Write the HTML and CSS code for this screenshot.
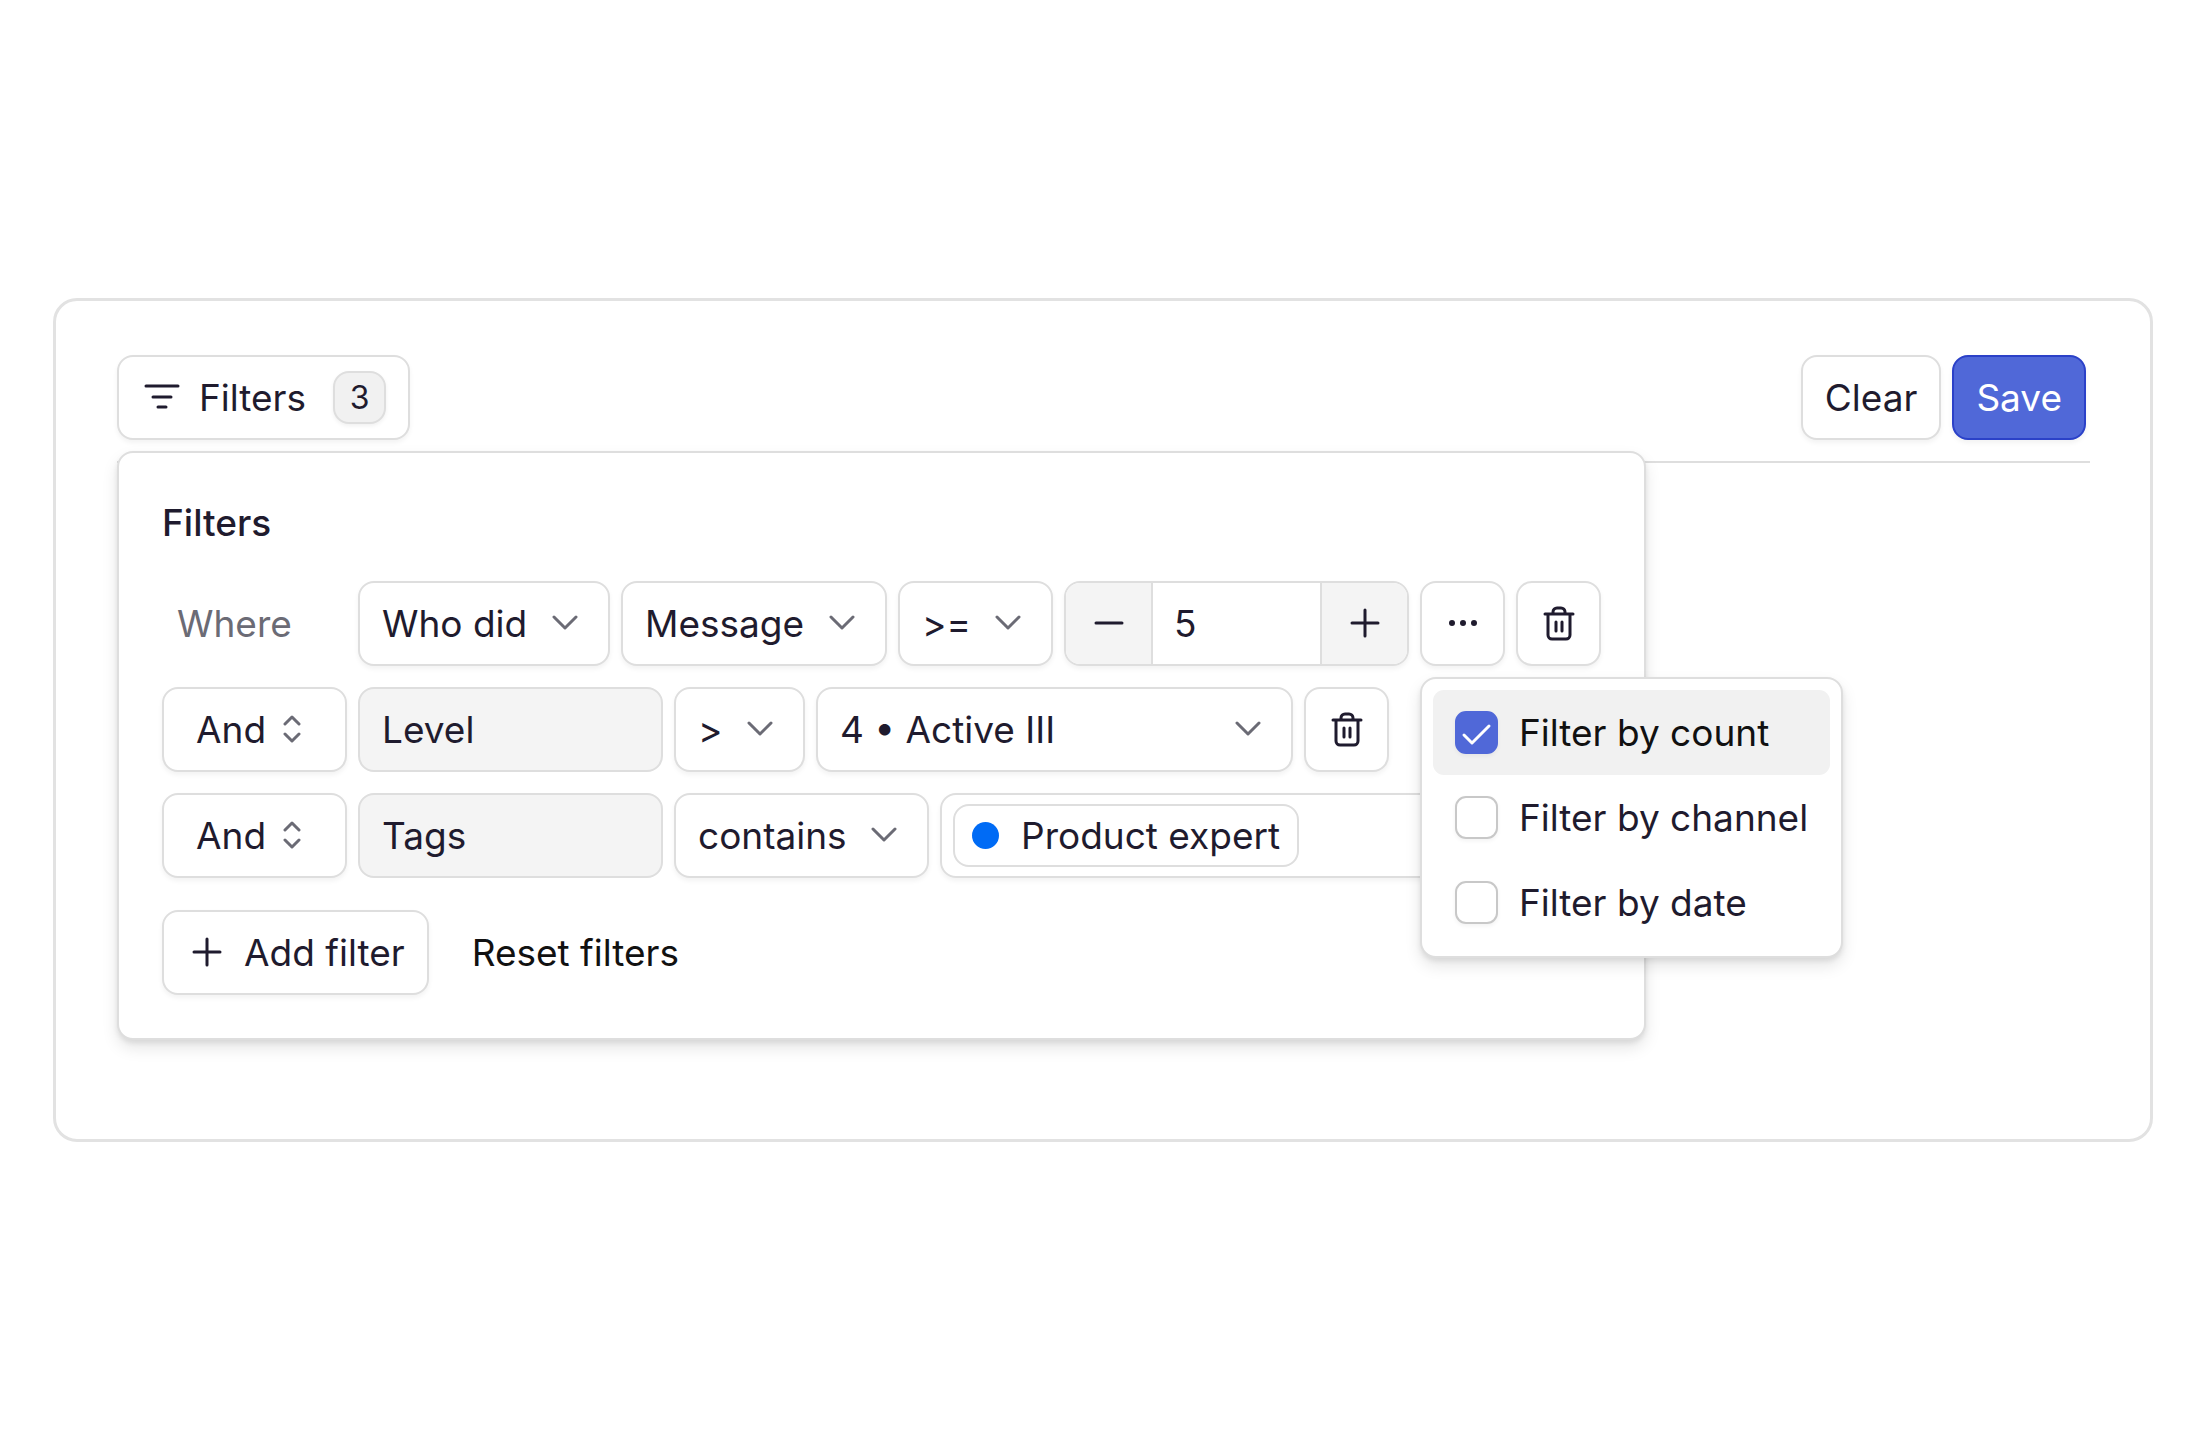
FILE: index.html
```
<!DOCTYPE html>
<html lang="en">
<head>
    <meta charset="UTF-8">
    <meta name="viewport" content="width=device-width, initial-scale=1.0">
    <link rel="stylesheet" href="styles.css">
    <title>Filters</title>
</head>
<body>
    <!-- Shared icons -->
    <svg class="sprite" aria-hidden="true">
        <symbol id="chevron" viewBox="0 0 26 16"><path d="M2 2l11 11L24 2"/></symbol>
        <symbol id="updown" viewBox="0 0 18 28"><path d="M2 9l7-7 7 7M2 19l7 7 7-7"/></symbol>
        <symbol id="plus" viewBox="0 0 30 30"><path d="M15 2v26M2 15h26"/></symbol>
        <symbol id="minus" viewBox="0 0 30 30"><path d="M2 15h26"/></symbol>
        <symbol id="trash" viewBox="0 0 36 36"><path d="M4 9h28M12 9V7a4 4 0 0 1 4-4h4a4 4 0 0 1 4 4v2M7 9v21a4 4 0 0 0 4 4h14a4 4 0 0 0 4-4V9M15 17v9M21 17v9"/></symbol>
        <symbol id="check" viewBox="0 0 43 43"><path d="M9 24l8 8 17-17"/></symbol>
    </svg>

    <main class="card">
        <header class="toolbar">
            <button type="button" class="btn filters-btn">
                <svg class="icon" width="36" height="26" viewBox="0 0 36 26"><path d="M2 2h32M9 13h18M14 23h8"/></svg>
                Filters
                <span class="badge">3</span>
            </button>
            <div class="actions">
                <button type="button" class="btn">Clear</button>
                <button type="button" class="btn primary">Save</button>
            </div>
        </header>

        <form class="popup">
            <h2>Filters</h2>

            <div class="rows">
                <div class="row">
                    <span class="where">Where</span>
                    <div class="select">
                        <select aria-label="Type"><option>Who did</option></select>
                        <svg class="icon chevron"><use href="#chevron"/></svg>
                    </div>
                    <div class="select">
                        <select aria-label="Event"><option>Message</option></select>
                        <svg class="icon chevron"><use href="#chevron"/></svg>
                    </div>
                    <div class="select">
                        <select aria-label="Count operator"><option>&gt;=</option></select>
                        <svg class="icon chevron"><use href="#chevron"/></svg>
                    </div>
                    <div class="stepper">
                        <button type="button" aria-label="Decrease"><svg class="icon math"><use href="#minus"/></svg></button>
                        <input type="text" inputmode="numeric" aria-label="Count" value="5">
                        <button type="button" aria-label="Increase"><svg class="icon math"><use href="#plus"/></svg></button>
                    </div>
                    <div class="more">
                        <button type="button" class="btn square" aria-label="More options">
                            <svg class="dots" width="30" height="8" viewBox="0 0 30 8"><circle cx="4" cy="4" r="3"/><circle cx="15" cy="4" r="3"/><circle cx="26" cy="4" r="3"/></svg>
                        </button>
                        <div class="menu">
                            <label class="menu-item active">
                                <span class="check"><input type="checkbox" checked><svg class="icon"><use href="#check"/></svg></span>
                                Filter by count
                            </label>
                            <label class="menu-item">
                                <span class="check"><input type="checkbox"></span>
                                Filter by channel
                            </label>
                            <label class="menu-item">
                                <span class="check"><input type="checkbox"></span>
                                Filter by date
                            </label>
                        </div>
                    </div>
                    <button type="button" class="btn square" aria-label="Delete filter"><svg class="icon trash"><use href="#trash"/></svg></button>
                </div>

                <div class="row">
                    <div class="select logic">
                        <select aria-label="Logic"><option>And</option></select>
                        <svg class="icon updown"><use href="#updown"/></svg>
                    </div>
                    <input class="field" type="text" aria-label="Attribute" value="Level" readonly>
                    <div class="select">
                        <select aria-label="Level operator"><option>&gt;</option></select>
                        <svg class="icon chevron"><use href="#chevron"/></svg>
                    </div>
                    <div class="select wide">
                        <select aria-label="Level"><option>4 • Active III</option></select>
                        <svg class="icon chevron"><use href="#chevron"/></svg>
                    </div>
                    <button type="button" class="btn square" aria-label="Delete filter"><svg class="icon trash"><use href="#trash"/></svg></button>
                </div>

                <div class="row">
                    <div class="select logic">
                        <select aria-label="Logic"><option>And</option></select>
                        <svg class="icon updown"><use href="#updown"/></svg>
                    </div>
                    <input class="field" type="text" aria-label="Attribute" value="Tags" readonly>
                    <div class="select">
                        <select aria-label="Tags operator"><option>contains</option></select>
                        <svg class="icon chevron"><use href="#chevron"/></svg>
                    </div>
                    <div class="tags">
                        <span class="tag">Product expert</span>
                    </div>
                </div>
            </div>

            <div class="row">
                <button type="button" class="btn add"><svg class="icon math"><use href="#plus"/></svg>Add filter</button>
                <button type="reset" class="link">Reset filters</button>
            </div>
        </form>
    </main>
</body>
</html>
```
FILE: styles.css
```
* {
    box-sizing: border-box;
}

body {
    margin: 0;
    min-height: 100vh;
    padding: 53px 54px 54px 53px;
    display: flex;
    align-items: center;
    background-color: #fff;
    color: #1f1b2e;
    font-family: Inter, sans-serif;
    font-size: 37px;
    line-height: 53px;
}

button, input, select {
    font: inherit;
    color: inherit;
    margin: 0;
}

button, select {
    cursor: pointer;
}

.sprite {
    position: absolute;
    width: 0;
    height: 0;
}

/* Icons */
.icon {
    flex: none;
    fill: none;
    stroke: currentColor;
    stroke-width: 3;
    stroke-linecap: round;
    stroke-linejoin: round;
}

.chevron {
    width: 26px;
    height: 16px;
    color: #6b6b75;
}

.updown {
    width: 18px;
    height: 28px;
    color: #6b6b75;
}

.math {
    width: 30px;
    height: 30px;
}

.trash {
    width: 36px;
    height: 36px;
}

.dots {
    fill: currentColor;
}

/* Card and toolbar */
.card {
    flex: 1;
    border: 3px solid #e2e2e2;
    border-radius: 24px;
    padding: 54px 60px 99px 61px;
}

.toolbar {
    display: flex;
    justify-content: space-between;
    border-bottom: 2px solid #dedede;
    padding: 0 4px 21px 0;
}

.actions {
    display: flex;
    gap: 11px;
}

.btn {
    display: flex;
    align-items: center;
    justify-content: center;
    height: 85px;
    padding: 0 22px;
    background-color: #fff;
    border: 2px solid #dedede;
    border-radius: 16px;
    box-shadow: 0 3px 5px rgba(0, 0, 0, 0.05);
    white-space: nowrap;
}

.primary {
    background-color: #5068d8;
    border-color: #2b41c8;
    color: #fff;
}

.square {
    width: 85px;
    padding: 0;
}

.filters-btn {
    gap: 19px;
    padding: 0 22px 0 25px;
}

.badge {
    width: 53px;
    height: 53px;
    margin-left: 8px;
    border: 2px solid #dedede;
    border-radius: 16px;
    background-color: #f1f1f1;
    box-shadow: 0 2px 4px rgba(0, 0, 0, 0.06);
    font-size: 32px;
    line-height: 49px;
    text-align: center;
}

/* Filters popup */
.popup {
    position: relative;
    width: fit-content;
    margin-top: -12px;
    padding: 43px;
    display: flex;
    flex-direction: column;
    gap: 32px;
    background-color: #fff;
    border: 2px solid #dedede;
    border-radius: 16px;
    box-shadow: 0 8px 16px rgba(0, 0, 0, 0.1), 0 3px 5px rgba(0, 0, 0, 0.08);
}

.popup h2 {
    margin: 0;
    font-size: 37px;
    font-weight: 500;
}

.rows {
    display: flex;
    flex-direction: column;
    gap: 21px;
}

.row {
    display: flex;
    align-items: center;
    gap: 11px;
}

.where {
    width: 185px;
    padding-left: 15px;
    color: #6b6b75;
}

/* The icon shares the cell of the select */
.select {
    display: grid;
    align-items: center;
}

.select select, .select svg {
    grid-area: 1 / 1;
}

.select select {
    appearance: none;
    height: 85px;
    padding: 0 80px 0 22px;
    background-color: #fff;
    border: 2px solid #dedede;
    border-radius: 16px;
    box-shadow: 0 3px 5px rgba(0, 0, 0, 0.05);
}

.select svg {
    justify-self: end;
    margin-right: 32px;
    pointer-events: none;
}

.logic {
    width: 185px;
}

.logic select {
    padding: 0 0 0 32px;
}

.logic svg {
    margin-right: 46px;
}

.wide {
    width: 477px;
}

.field {
    width: 305px;
    height: 85px;
    padding: 0 22px;
    background-color: #f4f4f4;
    border: 2px solid #dedede;
    border-radius: 16px;
}

.stepper {
    display: flex;
    height: 85px;
    border: 2px solid #dedede;
    border-radius: 16px;
    box-shadow: 0 3px 5px rgba(0, 0, 0, 0.05);
    overflow: hidden;
}

.stepper button {
    display: flex;
    align-items: center;
    justify-content: center;
    width: 85px;
    padding: 0;
    border: none;
    background-color: #f4f4f4;
}

.stepper input {
    width: 171px;
    padding: 0 21px;
    border: solid #dedede;
    border-width: 0 2px;
}

.tags {
    flex: 1;
    display: flex;
    align-items: center;
    height: 85px;
    padding: 0 11px;
    border: 2px solid #dedede;
    border-radius: 16px;
    box-shadow: 0 3px 5px rgba(0, 0, 0, 0.05);
}

.tag {
    display: flex;
    align-items: center;
    gap: 22px;
    height: 63px;
    padding: 0 17px;
    border: 2px solid #dedede;
    border-radius: 16px;
    white-space: nowrap;
}

.tag::before {
    content: "";
    width: 27px;
    height: 27px;
    border-radius: 50%;
    background-color: #006bf5;
}

.add {
    gap: 22px;
    padding: 0 22px 0 28px;
}

.link {
    padding: 0 32px;
    border: none;
    background: none;
    color: #111;
}

/* Options menu */
.more {
    position: relative;
}

.menu {
    position: absolute;
    z-index: 1;
    top: calc(100% + 11px);
    left: 0;
    padding: 11px;
    background-color: #fff;
    border: 2px solid #dedede;
    border-radius: 16px;
    box-shadow: 0 8px 16px rgba(0, 0, 0, 0.1), 0 3px 5px rgba(0, 0, 0, 0.08);
}

.menu-item {
    display: flex;
    align-items: center;
    gap: 21px;
    height: 85px;
    padding: 0 22px;
    border-radius: 11px;
    white-space: nowrap;
    cursor: pointer;
}

.menu-item.active {
    background-color: #f1f1f1;
    color: #111;
}

.check {
    display: grid;
}

.check input, .check svg {
    grid-area: 1 / 1;
    width: 43px;
    height: 43px;
}

.check input {
    appearance: none;
    background-color: #fff;
    border: 2px solid #c8c8c8;
    border-radius: 11px;
    box-shadow: 0 2px 4px rgba(0, 0, 0, 0.05);
}

.check input:checked {
    background-color: #5068d8;
    border-color: #5068d8;
}

.check svg {
    color: #fff;
    pointer-events: none;
}
```
